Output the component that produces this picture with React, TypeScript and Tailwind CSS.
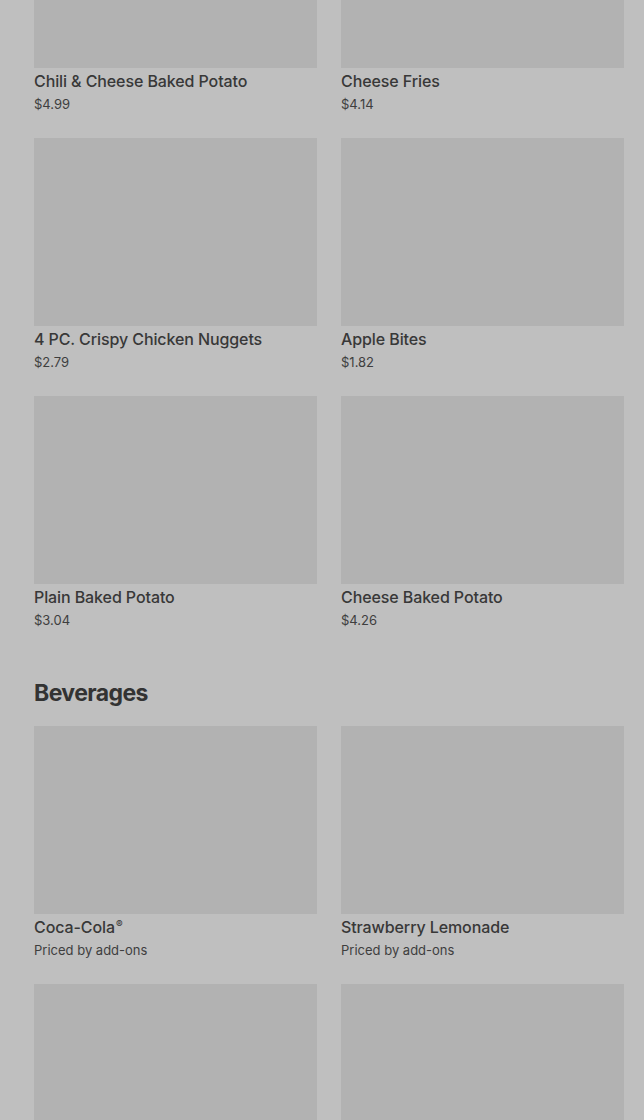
import React from 'react';

type Item = { name: string; price: string; mark?: boolean };

const sides: Item[] = [
  { name: 'Chili & Cheese Baked Potato', price: '$4.99' },
  { name: 'Cheese Fries', price: '$4.14' },
  { name: '4 PC. Crispy Chicken Nuggets', price: '$2.79' },
  { name: 'Apple Bites', price: '$1.82' },
  { name: 'Plain Baked Potato', price: '$3.04' },
  { name: 'Cheese Baked Potato', price: '$4.26' },
];

const beverages: Item[] = [
  { name: 'Coca-Cola', price: 'Priced by add-ons', mark: true },
  { name: 'Strawberry Lemonade', price: 'Priced by add-ons' },
];

function Card({ item }: { item: Item }) {
  return (
    <div className="pb-6">
      <div className="h-[188px] bg-[#b2b2b2]" />
      <div className="mt-px text-[16px] leading-6 font-medium tracking-[-0.1px] text-[#383838]">
        {item.name}
        {item.mark && <span className="text-[10px] leading-none align-[5px] ml-px">®</span>}
      </div>
      <div className="mt-px text-[13px] leading-5 text-[#3e3e3e]">{item.price}</div>
    </div>
  );
}

export default function App() {
  return (
    <div
      className="h-[1120px] overflow-hidden bg-[#bfbfbf]"
      style={{ fontFamily: 'Inter, "Noto Sans", sans-serif' }}
    >
      <div className="-mt-[120px] pl-[34px] pr-[20px]">
        <div className="grid grid-cols-2 gap-x-6">
          {sides.map((item) => (
            <Card key={item.name} item={item} />
          ))}
        </div>

        <h2 className="mt-[21px] mb-[15px] text-[23px] leading-9 font-bold tracking-tight text-[#333333]">
          Beverages
        </h2>

        <div className="grid grid-cols-2 gap-x-6">
          {beverages.map((item) => (
            <Card key={item.name} item={item} />
          ))}
          {/* next row, only the photos are in view */}
          <div className="h-[188px] bg-[#b2b2b2]" />
          <div className="h-[188px] bg-[#b2b2b2]" />
        </div>
      </div>
    </div>
  );
}
